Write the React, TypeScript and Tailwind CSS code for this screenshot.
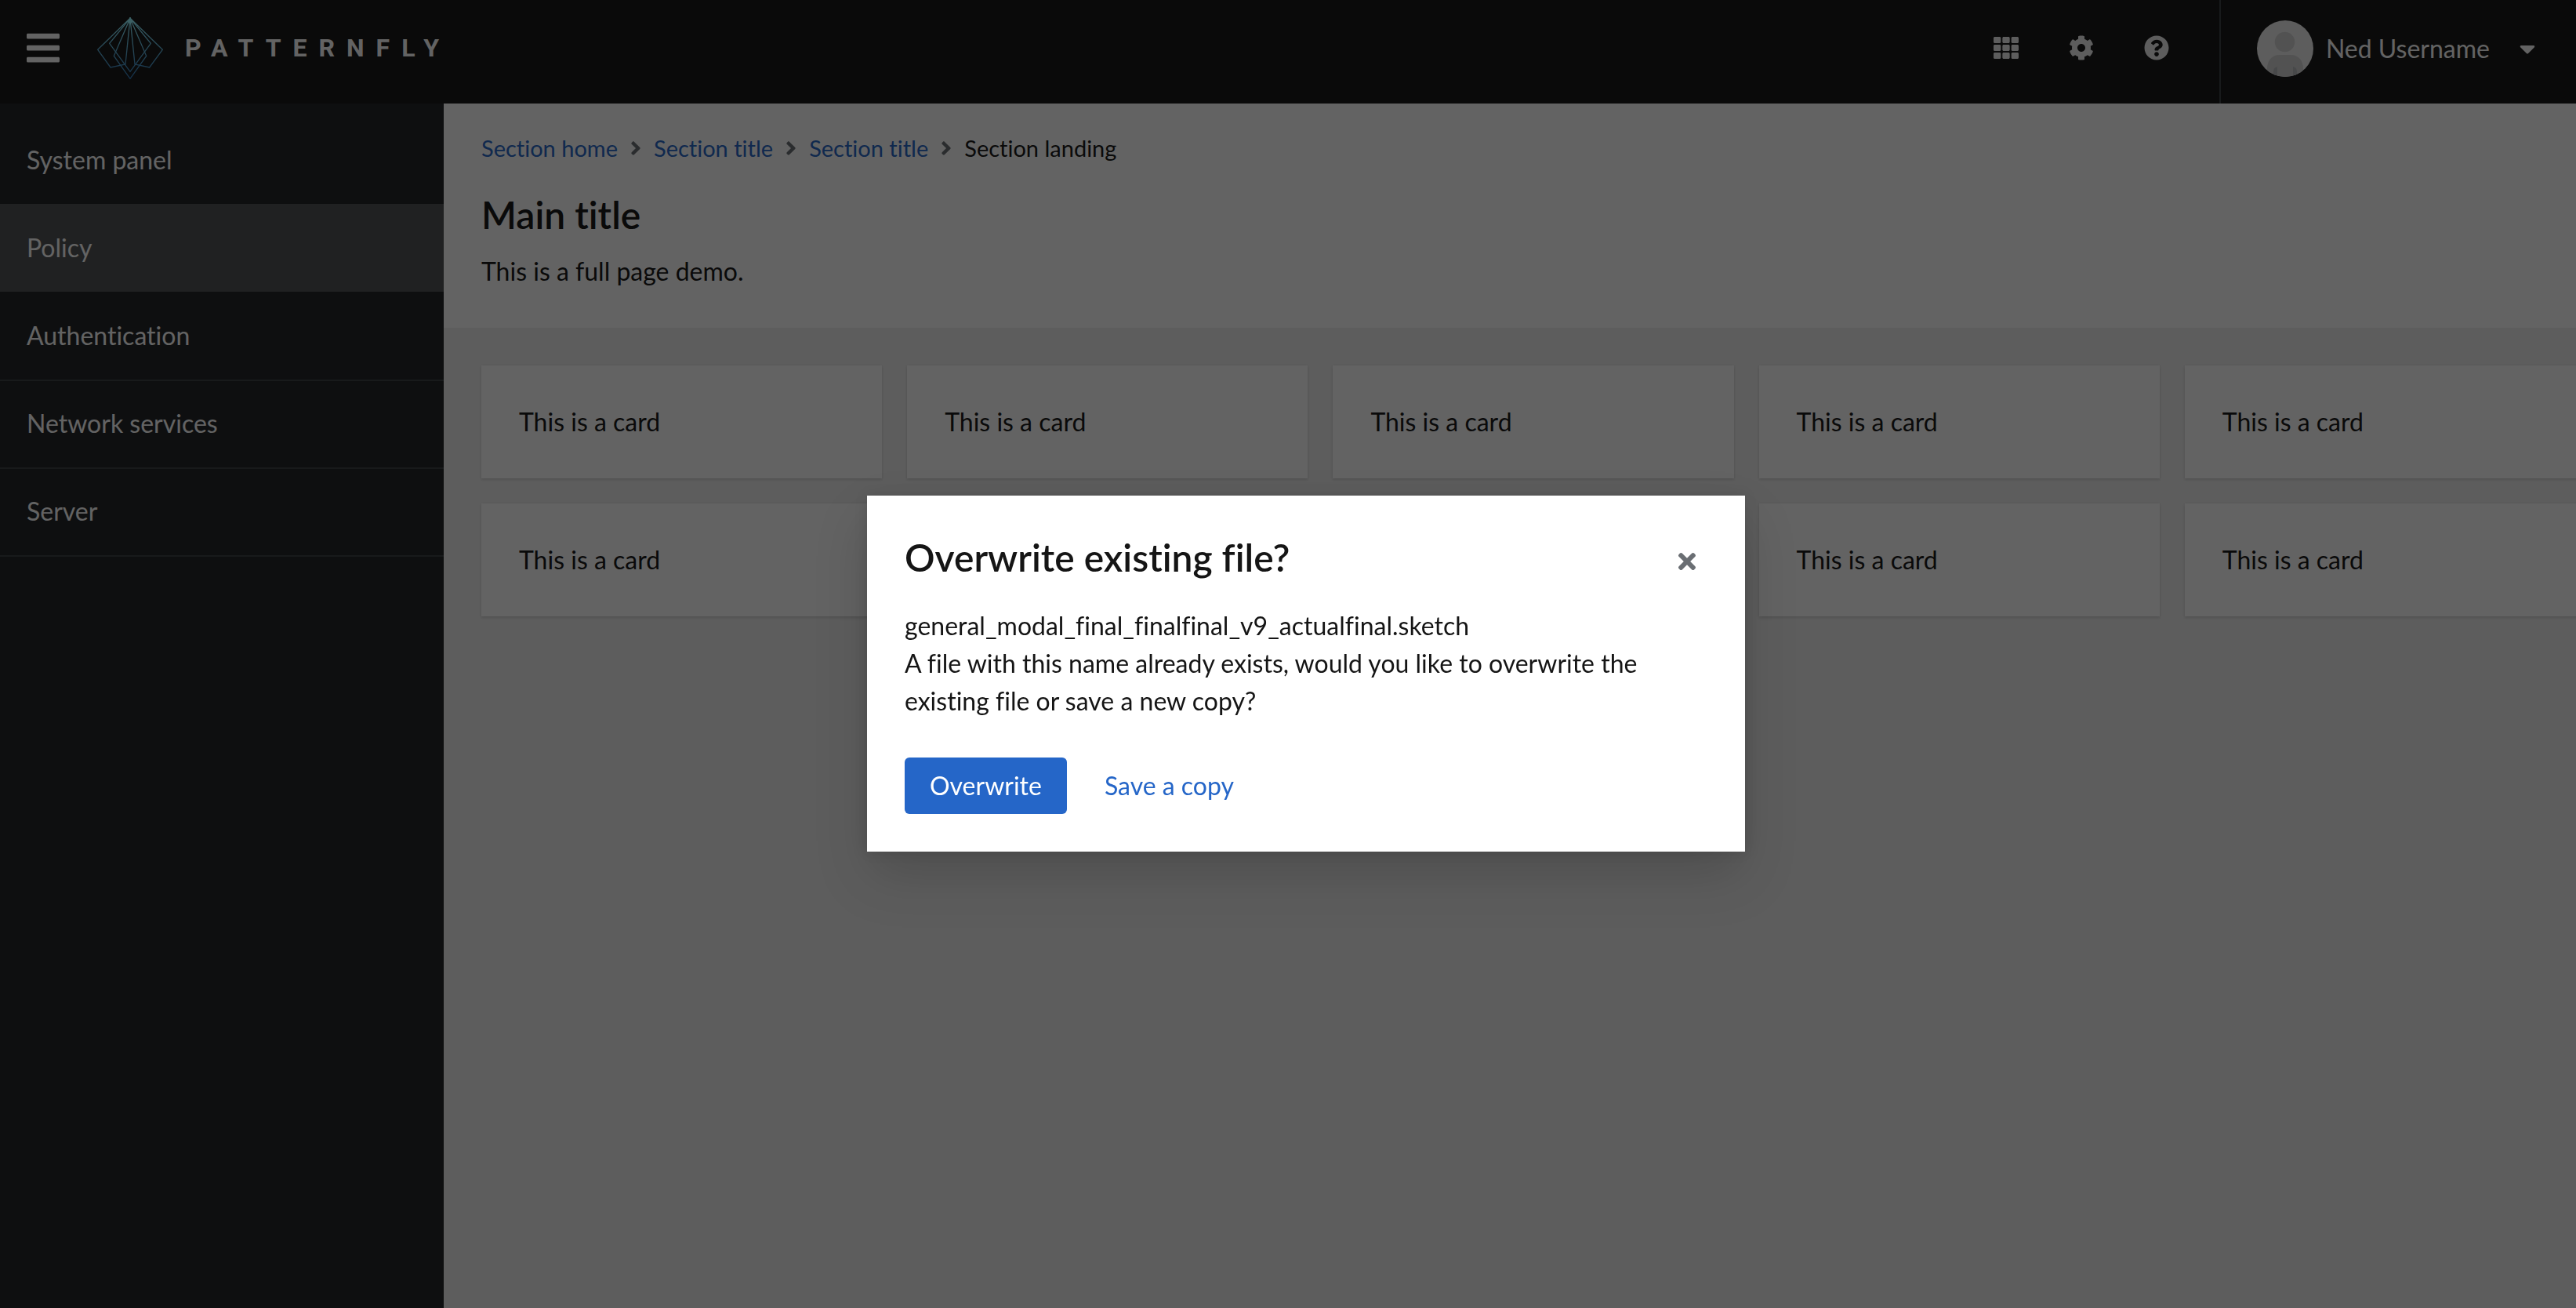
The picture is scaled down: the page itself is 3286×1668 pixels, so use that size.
import {
  FaAngleRight,
  FaBars,
  FaCaretDown,
  FaCog,
  FaQuestionCircle,
  FaTh,
  FaTimes,
} from "react-icons/fa";

const navItems = [
  { label: "System panel", current: false },
  { label: "Policy", current: true },
  { label: "Authentication", current: false },
  { label: "Network services", current: false },
  { label: "Server", current: false },
];

const crumbs = ["Section home", "Section title", "Section title"];

const cards = Array.from({ length: 10 }, (_, i) => i);

function Logo() {
  return (
    <svg
      viewBox="72 36 252 237"
      className="h-[79px] w-[84px]"
      fill="none"
      stroke="url(#logo-fade)"
      strokeWidth="4"
      strokeLinejoin="miter"
      aria-hidden="true"
    >
      <defs>
        <linearGradient id="logo-fade" gradientUnits="userSpaceOnUse" x1="198" y1="38" x2="198" y2="272">
          <stop offset="0" stopColor="#96f4ff" />
          <stop offset="1" stopColor="#2f78b8" />
        </linearGradient>
      </defs>
      <path d="M198 40 L74 160 L123 228 L180 216 Z" />
      <path d="M198 40 L322 160 L272 228 L216 216 Z" />
      <path d="M198 40 L119 136 L198 244 L277 136 Z" />
      <path d="M198 40 L136 184 L198 271 L260 184 Z" />
      <path d="M198 38 L186 50 L198 62 L210 50 Z" fill="#96f4ff" stroke="none" />
    </svg>
  );
}

function Avatar() {
  return (
    <svg viewBox="0 0 72 72" className="size-[72px]" role="img" aria-label="Avatar">
      <defs>
        <clipPath id="avatar-clip">
          <circle cx="36" cy="36" r="36" />
        </clipPath>
      </defs>
      <g clipPath="url(#avatar-clip)">
        <rect width="72" height="72" fill="#f0f0f0" />
        <circle cx="35.5" cy="27.5" r="12.8" fill="#d2d2d2" />
        <path d="M13 72V62C13 51 19 44 29 44H43C53 44 59 51 59 62V72Z" fill="#d2d2d2" />
        <path d="M21 72V65Q21 60 26 59V72Z" fill="#b8bbbe" />
        <path d="M51 72V65Q51 60 46 59V72Z" fill="#b8bbbe" />
      </g>
    </svg>
  );
}

function Header() {
  return (
    <header className="flex h-[132px] shrink-0 items-stretch justify-between bg-[#151515] text-white">
      <div className="flex items-center pb-2.5 pl-[31px]">
        <button type="button" aria-label="Global navigation">
          <FaBars className="size-12" />
        </button>
        <a href="#" aria-label="PatternFly" className="ml-[45px] flex items-center gap-7">
          <Logo />
          <span className="font-['Roboto',sans-serif] text-[32px] leading-10 font-bold tracking-[15px]">
            PATTERNFLY
          </span>
        </a>
      </div>
      <div className="flex items-stretch">
        <div className="flex items-center pr-8 pb-2.5 text-[#f0f0f0]">
          <button type="button" aria-label="Applications" className="px-8">
            <FaTh className="size-8" />
          </button>
          <button type="button" aria-label="Settings" className="px-8">
            <FaCog className="size-8" />
          </button>
          <button type="button" aria-label="Help" className="px-8">
            <FaQuestionCircle className="size-8" />
          </button>
        </div>
        <button
          type="button"
          className="flex items-center border-l-2 border-[#3c3f42] pr-[46px] pb-2 pl-[46px] text-[32px] leading-12"
        >
          <Avatar />
          <span className="ml-4">Ned Username</span>
          <FaCaretDown className="ml-8 size-8" />
        </button>
      </div>
    </header>
  );
}

function Sidebar() {
  return (
    <nav aria-label="Global" className="w-[566px] shrink-0 bg-[#212427] pt-[18px]">
      <ul>
        {navItems.map((item) => (
          <li key={item.label}>
            <a
              href="#"
              aria-current={item.current ? "page" : undefined}
              className={
                item.current
                  ? "-mt-0.5 block border-b-2 border-[#212427] bg-[#4f5255] px-[34px] py-8 text-[32px] leading-12 text-white"
                  : "block border-b-2 border-[#3c3f42] px-[34px] pt-[30px] pb-8 text-[32px] leading-12 text-white"
              }
            >
              {item.label}
            </a>
          </li>
        ))}
      </ul>
    </nav>
  );
}

function Main() {
  return (
    <main className="min-w-0 flex-1 overflow-hidden bg-[#f0f0f0]">
      <section className="bg-white px-12 pt-9 pb-12">
        <nav aria-label="Breadcrumb">
          <ol className="flex items-center gap-[9px] text-[29px] leading-[42px]">
            {crumbs.map((crumb, i) => (
              <li key={i} className="flex items-center gap-[9px]">
                <a href="#" className="text-[#2566c8]">
                  {crumb}
                </a>
                <FaAngleRight className="size-7 text-[#6a6e73]" />
              </li>
            ))}
            <li aria-current="page">Section landing</li>
          </ol>
        </nav>
        <h1 className="mt-8 text-[48px] leading-[64px] font-semibold">Main title</h1>
        <p className="mt-4 text-[32px] leading-12">This is a full page demo.</p>
      </section>
      <section className="py-12 pl-12">
        <div className="-mr-3 grid grid-cols-5 gap-8">
          {cards.map((card) => (
            <article
              key={card}
              className="bg-white p-12 text-[32px] leading-12 shadow-[0_2px_4px_0_rgba(3,3,3,0.12),0_0_4px_0_rgba(3,3,3,0.06)]"
            >
              This is a card
            </article>
          ))}
        </div>
      </section>
    </main>
  );
}

function Modal() {
  return (
    <div className="fixed inset-0 flex items-center justify-center bg-[rgba(3,3,3,0.62)] pt-[50px] pl-[46px]">
      <div
        role="dialog"
        aria-modal="true"
        aria-labelledby="modal-title"
        aria-describedby="modal-body"
        className="w-[1120px] bg-white p-12 shadow-[0_32px_64px_0_rgba(3,3,3,0.16),0_0_16px_0_rgba(3,3,3,0.1)]"
      >
        <div className="flex items-end justify-between">
          <h2 id="modal-title" className="text-[48px] leading-[62px] font-semibold">
            Overwrite existing file?
          </h2>
          <button type="button" aria-label="Close" className="p-2.5 text-[#6a6e73]">
            <FaTimes className="size-8" />
          </button>
        </div>
        <p id="modal-body" className="mt-8 text-[32px] leading-12">
          general_modal_final_finalfinal_v9_actualfinal.sketch
          <br />
          A file with this name already exists, would you like to overwrite the existing file or save a new copy?
        </p>
        <div className="mt-12 flex gap-4 text-[32px] leading-12">
          <button type="button" className="rounded-md bg-[#2566c8] px-8 py-3 text-white">
            Overwrite
          </button>
          <button type="button" className="rounded-md px-8 py-3 text-[#2566c8]">
            Save a copy
          </button>
        </div>
      </div>
    </div>
  );
}

export default function App() {
  return (
    <div className="flex h-screen flex-col overflow-hidden font-['Lato',sans-serif] text-[#151515] [font-variant-ligatures:none]">
      <Header />
      <div className="flex min-h-0 flex-1">
        <Sidebar />
        <Main />
      </div>
      <Modal />
    </div>
  );
}
